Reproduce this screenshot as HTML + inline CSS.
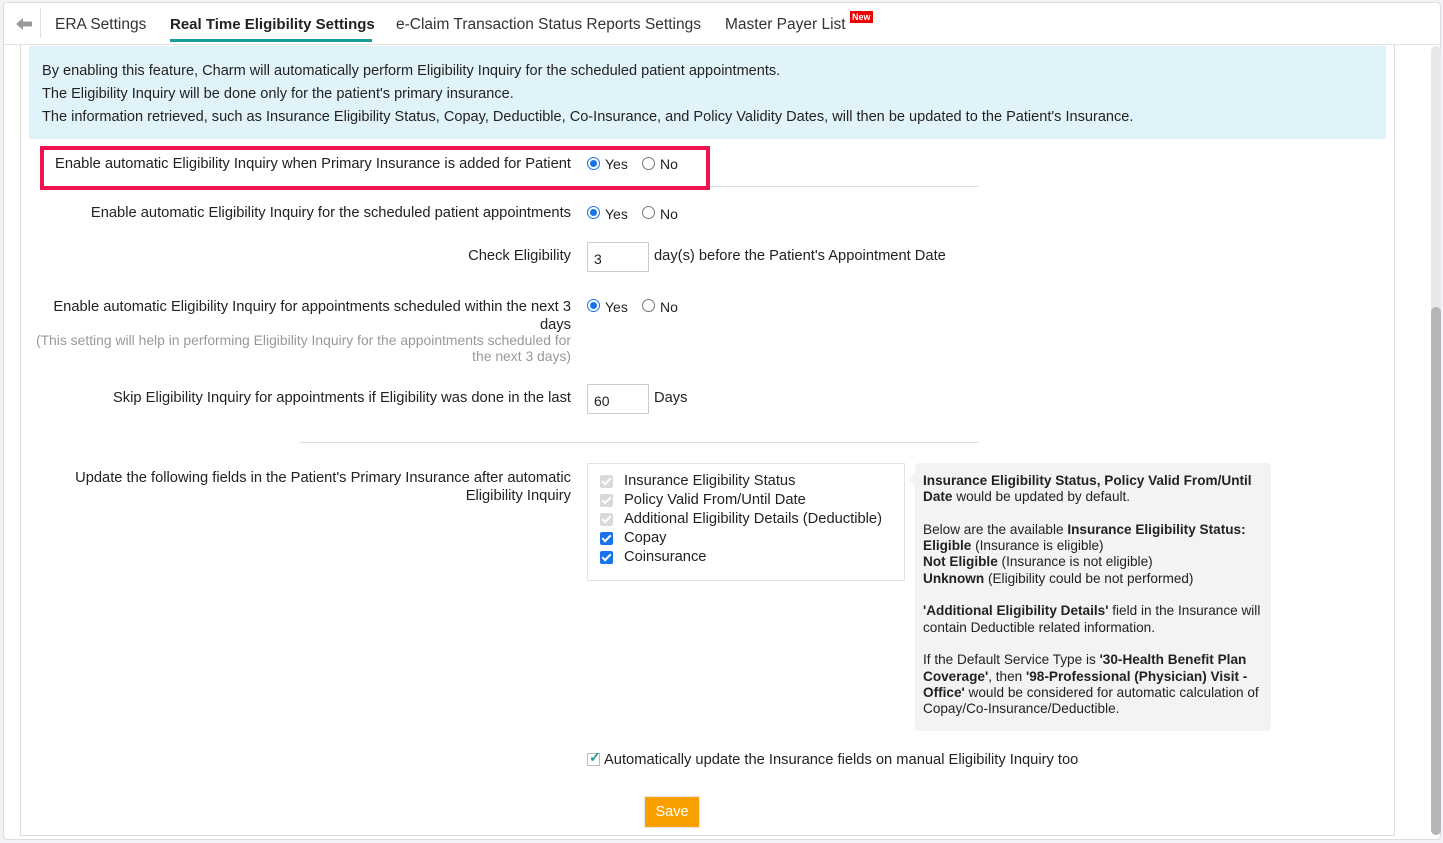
<!DOCTYPE html>
<html><head><meta charset="utf-8"><style>
*{margin:0;padding:0;box-sizing:border-box}
body{width:1443px;height:843px;background:#f2f3f6;font-family:"Liberation Sans",sans-serif;color:#222;font-size:14px;position:relative;overflow:hidden}
.a{position:absolute;white-space:nowrap}
.r{text-align:right}
.l{font-size:14.7px}
.radio{position:absolute;width:13px;height:13px;border-radius:50%;border:1px solid #777;background:#fff}
.radio.on{border:1px solid #1a73e8}
.radio.on::after{content:"";position:absolute;left:2px;top:2px;width:7px;height:7px;border-radius:50%;background:#1a73e8}
.inp{position:absolute;border:1px solid #ccc;background:#fff;font-size:14px;padding:8px 6px 0}
.cb{position:absolute;width:13px;height:13px;border-radius:2px;background:#1a73e8}
.cb.dis{background:#d9d9d9}
.cb::after{content:"";position:absolute;left:4px;top:1px;width:3px;height:7px;border:solid #fff;border-width:0 2px 2px 0;transform:rotate(45deg)}
.tip{font-size:13.6px;line-height:16.3px;color:#222}
</style></head><body>
<div class="a" style="left:3px;top:2px;width:1438px;height:838px;background:#fff;border:1px solid #ddd;border-radius:4px"></div>
<div class="a" style="left:3px;top:44px;width:1438px;height:1px;background:#e3e3e3"></div>
<div class="a" style="left:20px;top:45px;width:1375px;height:791px;border-left:1px solid #ddd;border-right:1px solid #ddd;border-bottom:1px solid #ddd"></div>
<div class="a" style="left:1431px;top:46px;width:10px;height:789px;background:#e8e8e8;border-radius:5px"></div>
<div class="a" style="left:1431px;top:307px;width:10px;height:528px;background:#b5b5b5;border-radius:5px"></div>
<!-- header -->
<svg class="a" style="left:15px;top:16px" width="18" height="16" viewBox="0 0 18 16"><path d="M1 8 L8 2 V5.5 H17 V10.5 H8 V14 Z" fill="#999"/></svg>
<div class="a" style="left:40px;top:8px;width:1px;height:30px;background:#e0e0e0"></div>
<div class="a" style="left:55px;top:16px;font-size:15.5px;color:#333">ERA Settings</div>
<div class="a" style="left:170px;top:16px;font-size:15px;font-weight:bold;color:#222">Real Time Eligibility Settings</div>
<div class="a" style="left:170px;top:39px;width:202px;height:3px;background:#1a9c9c"></div>
<div class="a" style="left:396px;top:16px;font-size:15.5px;color:#333">e-Claim Transaction Status Reports Settings</div>
<div class="a" style="left:725px;top:16px;font-size:15.5px;color:#333">Master Payer List</div>
<div class="a" style="left:850px;top:11px;background:#e00;color:#fff;font-size:9px;font-weight:bold;padding:0 2px;line-height:12px">New</div>
<!-- info -->
<div class="a" style="left:29px;top:46px;width:1357px;height:93px;background:#e1f3fa"></div>
<div class="a" style="left:42px;top:60px;font-size:14.55px;line-height:23px">By enabling this feature, Charm will automatically perform Eligibility Inquiry for the scheduled patient appointments.<br>The Eligibility Inquiry will be done only for the patient's primary insurance.<br>The information retrieved, such as Insurance Eligibility Status, Copay, Deductible, Co-Insurance, and Policy Validity Dates, will then be updated to the Patient's Insurance.</div>
<!-- row 1 -->
<div class="a" style="left:300px;top:186px;width:679px;height:1px;background:#ddd"></div>
<div class="a" style="left:40px;top:146px;width:670px;height:44px;border:4px solid #f0124e;background:#fff"></div>
<div class="a r l" style="right:872px;top:156px">Enable automatic Eligibility Inquiry when Primary Insurance is added for Patient</div>
<div class="radio on" style="left:587px;top:157px"></div><div class="a" style="left:605px;top:156px">Yes</div>
<div class="radio" style="left:642px;top:157px"></div><div class="a" style="left:660px;top:156px">No</div>
<!-- row 2 -->
<div class="a r l" style="right:872px;top:205px">Enable automatic Eligibility Inquiry for the scheduled patient appointments</div>
<div class="radio on" style="left:587px;top:206px"></div><div class="a" style="left:605px;top:206px">Yes</div>
<div class="radio" style="left:642px;top:206px"></div><div class="a" style="left:660px;top:206px">No</div>
<!-- row 3 -->
<div class="a r l" style="right:872px;top:248px">Check Eligibility</div>
<div class="inp" style="left:587px;top:242px;width:62px;height:30px">3</div>
<div class="a l" style="left:654px;top:248px">day(s) before the Patient's Appointment Date</div>
<!-- row 4 -->
<div class="a r l" style="right:872px;top:298px;line-height:18px">Enable automatic Eligibility Inquiry for appointments scheduled within the next 3<br>days</div>
<div class="a r" style="right:872px;top:332px;font-size:13.9px;line-height:16px;color:#999">(This setting will help in performing Eligibility Inquiry for the appointments scheduled for<br>the next 3 days)</div>
<div class="radio on" style="left:587px;top:299px"></div><div class="a" style="left:605px;top:299px">Yes</div>
<div class="radio" style="left:642px;top:299px"></div><div class="a" style="left:660px;top:299px">No</div>
<!-- row 5 -->
<div class="a r l" style="right:872px;top:390px">Skip Eligibility Inquiry for appointments if Eligibility was done in the last</div>
<div class="inp" style="left:587px;top:384px;width:62px;height:30px">60</div>
<div class="a l" style="left:654px;top:390px">Days</div>
<div class="a" style="left:300px;top:442px;width:679px;height:1px;background:#ddd"></div>
<!-- row 6 -->
<div class="a r l" style="right:872px;top:469px;line-height:18px">Update the following fields in the Patient's Primary Insurance after automatic<br>Eligibility Inquiry</div>
<div class="a" style="left:587px;top:463px;width:318px;height:118px;border:1px solid #e3e3e3"></div>
<div class="cb dis" style="left:600px;top:475px"></div><div class="a l" style="left:624px;top:473px">Insurance Eligibility Status</div>
<div class="cb dis" style="left:600px;top:494px"></div><div class="a l" style="left:624px;top:492px">Policy Valid From/Until Date</div>
<div class="cb dis" style="left:600px;top:513px"></div><div class="a l" style="left:624px;top:511px">Additional Eligibility Details (Deductible)</div>
<div class="cb" style="left:600px;top:532px"></div><div class="a l" style="left:624px;top:530px">Copay</div>
<div class="cb" style="left:600px;top:551px"></div><div class="a l" style="left:624px;top:549px">Coinsurance</div>
<!-- tooltip -->
<div class="a" style="left:915px;top:463px;width:356px;height:268px;background:#f3f3f3;border-radius:4px"></div>
<div class="a" style="left:908px;top:472px;width:0;height:0;border-top:7px solid transparent;border-bottom:7px solid transparent;border-right:7px solid #f3f3f3"></div>
<div class="a tip" style="left:923px;top:473px;white-space:normal;width:345px"><b>Insurance Eligibility Status, Policy Valid From/Until Date</b> would be updated by default.<br><br>Below are the available <b>Insurance Eligibility Status:</b><br><b>Eligible</b> (Insurance is eligible)<br><b>Not Eligible</b> (Insurance is not eligible)<br><b>Unknown</b> (Eligibility could be not performed)<br><br><b>'Additional Eligibility Details'</b> field in the Insurance will contain Deductible related information.<br><br>If the Default Service Type is <b>'30-Health Benefit Plan Coverage'</b>, then <b>'98-Professional (Physician) Visit - Office'</b> would be considered for automatic calculation of Copay/Co-Insurance/Deductible.</div>
<!-- auto update -->
<div class="a" style="left:587px;top:753px;width:13px;height:13px;border:1px solid #bbb;background:#fff"></div>
<div class="a" style="left:589px;top:749px;color:#1a9c9c;font-size:14px;font-weight:bold">✓</div>
<div class="a l" style="left:604px;top:752px">Automatically update the Insurance fields on manual Eligibility Inquiry too</div>
<!-- save -->
<div class="a" style="left:644px;top:796px;width:56px;height:32px;background:#f9a000;border:1px solid #e6e6e6;border-radius:2px;color:#fff;font-size:14.5px;text-align:center;line-height:30px">Save</div>
</body></html>
